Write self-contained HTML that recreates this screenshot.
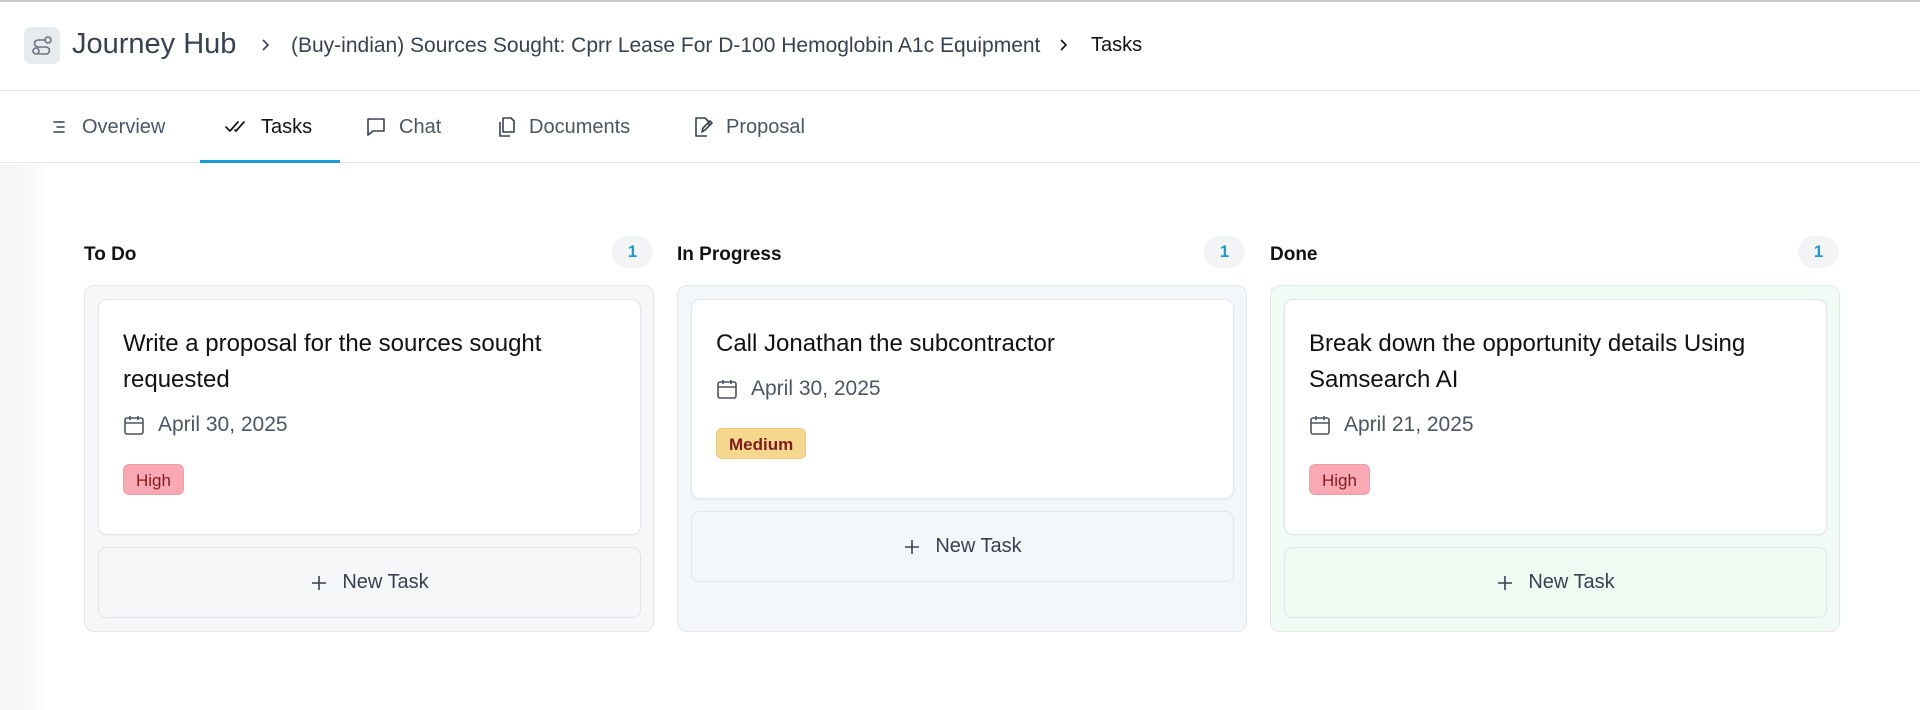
<!DOCTYPE html>
<html><head><meta charset="utf-8"><style>
*{box-sizing:border-box;margin:0;padding:0}
body{width:1920px;height:710px;overflow:hidden;background:#fff;font-family:"Liberation Sans",Arial,sans-serif;position:relative;color:#111}
.abs{position:absolute}
.topline{left:0;top:0;width:1920px;height:2px;background:#c8c9cc}
.hdr{left:0;top:2px;width:1920px;height:89px;border-bottom:1px solid #e5e7eb}
.body{left:0;top:164px;width:1920px;height:546px;background:linear-gradient(90deg,#f5f5f5 0,#f8f8f8 30px,#fff 50px)}
.tab{top:112px;font-size:20px;color:#4b5563;display:flex;align-items:center;height:30px}
.tab svg{margin-right:12px}
.col{width:570px;height:347px;top:285px;border:1px solid #e5e7eb;border-radius:10px}
.colh{top:244px;font-size:19px;font-weight:bold;color:#111}
.cnt{top:236px;width:41px;height:32px;border-radius:16px;background:#f3f4f6;color:#1a9bd7;font-size:17px;font-weight:bold;text-align:center;line-height:32px}
.card{width:543px;background:#fff;border:1px solid #e2e5ea;border-radius:9px;box-shadow:0 1px 2px rgba(0,0,0,.04)}
.title{position:absolute;left:24px;top:26px;width:500px;font-size:24px;line-height:36px;color:#111}
.date{position:absolute;left:24px;font-size:21px;color:#4b5563;display:flex;align-items:center}
.date svg{margin-right:13px}
.badge{position:absolute;left:24px;height:31px;border-radius:6px;font-size:17px;line-height:31px;padding:0 12px;border:1px solid rgba(0,0,0,.06)}
.nt{width:543px;height:71px;border:1px solid #e2e5ea;border-radius:8px;display:flex;align-items:center;justify-content:center;font-size:20px;color:#374151}
.nt svg{margin-right:14px}
</style></head><body>
<div class="abs topline"></div>
<div class="abs hdr"></div>
<div class="abs" style="left:24px;top:27px;width:36px;height:37px;border-radius:7px;background:#e8ebee"><svg width="36" height="37" viewBox="0 0 36 37"><g fill="none" stroke="#6b7280" stroke-width="1.6" stroke-linecap="round"><circle cx="12" cy="24" r="3"/><circle cx="24" cy="13" r="3"/><path d="M21 13h-7a3.5 3.5 0 0 0 0 7h8a3.5 3.5 0 0 1 0 7h-7"/></g></svg></div>
<div class="abs" style="left:72px;top:28px;font-size:29px;color:#374151">Journey Hub</div>
<svg class="abs" style="left:258px;top:38px" width="14" height="14" viewBox="0 0 14 14"><path d="M5 2l5 5-5 5" fill="none" stroke="#374151" stroke-width="1.6"/></svg>
<div class="abs" style="left:291px;top:34px;font-size:21px;color:#374151;white-space:nowrap">(Buy-indian) Sources Sought: Cprr Lease For D-100 Hemoglobin A1c Equipment</div>
<svg class="abs" style="left:1056px;top:38px" width="14" height="14" viewBox="0 0 14 14"><path d="M5 2l5 5-5 5" fill="none" stroke="#111" stroke-width="1.6"/></svg>
<div class="abs" style="left:1091px;top:34px;font-size:20px;color:#111">Tasks</div>

<div class="abs tab" style="left:52px"><svg width="18" height="18" viewBox="0 0 18 18"><path d="M2 4h10M5 9h7M2 14h10" stroke="#374151" stroke-width="1.6" fill="none" stroke-linecap="round"/></svg>Overview</div>
<div class="abs tab" style="left:225px;color:#111"><svg width="24" height="18" viewBox="0 0 24 18"><path d="M1 9l4 4 8-9M10 12l1 1 8-9" stroke="#111" stroke-width="1.7" fill="none" stroke-linecap="round" stroke-linejoin="round"/></svg>Tasks</div>
<div class="abs tab" style="left:365px"><svg width="22" height="22" viewBox="0 0 22 22"><path d="M3 3h16v12H8l-5 4z" stroke="#374151" stroke-width="1.6" fill="none" stroke-linejoin="round"/></svg>Chat</div>
<div class="abs tab" style="left:495px"><svg width="22" height="22" viewBox="0 0 22 22"><path d="M8 2h8l3 3v11H8z M5 6v14h10" stroke="#374151" stroke-width="1.6" fill="none" stroke-linejoin="round"/></svg>Documents</div>
<div class="abs tab" style="left:692px"><svg width="22" height="22" viewBox="0 0 22 22"><path d="M15 20H4V2h9l4 4v3 M10 16l1-4 7-7 2 2-7 7z" stroke="#374151" stroke-width="1.6" fill="none" stroke-linejoin="round"/></svg>Proposal</div>
<div class="abs" style="left:0;top:162px;width:1920px;height:1px;background:#e5e7eb"></div>
<div class="abs" style="left:200px;top:160px;width:140px;height:3px;background:#1a9bd7"></div>
<div class="abs body"></div>

<!-- To Do -->
<div class="abs colh" style="left:84px">To Do</div>
<div class="abs cnt" style="left:612px">1</div>
<div class="abs col" style="left:84px;background:#f7f7f8">
 <div class="abs card" style="left:13px;top:13px;height:236px">
  <div class="title">Write a proposal for the sources sought requested</div>
  <div class="date" style="top:113px"><svg width="22" height="22" viewBox="0 0 22 22"><rect x="2" y="4" width="18" height="16" rx="2" fill="none" stroke="#4b5563" stroke-width="1.6"/><path d="M2 9h18M7 2v4M15 2v4" stroke="#4b5563" stroke-width="1.6"/></svg>April 30, 2025</div>
  <div class="badge" style="top:164px;background:#f9a8b4;color:#7f1d1d">High</div>
 </div>
 <div class="abs nt" style="left:13px;top:261px;background:#f6f7f8"><svg width="18" height="18" viewBox="0 0 18 18"><path d="M9 2v14M2 9h14" stroke="#374151" stroke-width="1.6"/></svg>New Task</div>
</div>

<!-- In Progress -->
<div class="abs colh" style="left:677px">In Progress</div>
<div class="abs cnt" style="left:1204px">1</div>
<div class="abs col" style="left:677px;background:#f3f7fa">
 <div class="abs card" style="left:13px;top:13px;height:200px">
  <div class="title">Call Jonathan the subcontractor</div>
  <div class="date" style="top:77px"><svg width="22" height="22" viewBox="0 0 22 22"><rect x="2" y="4" width="18" height="16" rx="2" fill="none" stroke="#4b5563" stroke-width="1.6"/><path d="M2 9h18M7 2v4M15 2v4" stroke="#4b5563" stroke-width="1.6"/></svg>April 30, 2025</div>
  <div class="badge" style="top:128px;background:#f5d88e;color:#7f1d1d;font-weight:bold">Medium</div>
 </div>
 <div class="abs nt" style="left:13px;top:225px;background:#f3f7fa"><svg width="18" height="18" viewBox="0 0 18 18"><path d="M9 2v14M2 9h14" stroke="#374151" stroke-width="1.6"/></svg>New Task</div>
</div>

<!-- Done -->
<div class="abs colh" style="left:1270px">Done</div>
<div class="abs cnt" style="left:1798px">1</div>
<div class="abs col" style="left:1270px;background:#f1fbf5">
 <div class="abs card" style="left:13px;top:13px;height:236px">
  <div class="title">Break down the opportunity details Using Samsearch AI</div>
  <div class="date" style="top:113px"><svg width="22" height="22" viewBox="0 0 22 22"><rect x="2" y="4" width="18" height="16" rx="2" fill="none" stroke="#4b5563" stroke-width="1.6"/><path d="M2 9h18M7 2v4M15 2v4" stroke="#4b5563" stroke-width="1.6"/></svg>April 21, 2025</div>
  <div class="badge" style="top:164px;background:#f9a8b4;color:#7f1d1d">High</div>
 </div>
 <div class="abs nt" style="left:13px;top:261px;background:#eefbf3"><svg width="18" height="18" viewBox="0 0 18 18"><path d="M9 2v14M2 9h14" stroke="#374151" stroke-width="1.6"/></svg>New Task</div>
</div>
</body></html>
